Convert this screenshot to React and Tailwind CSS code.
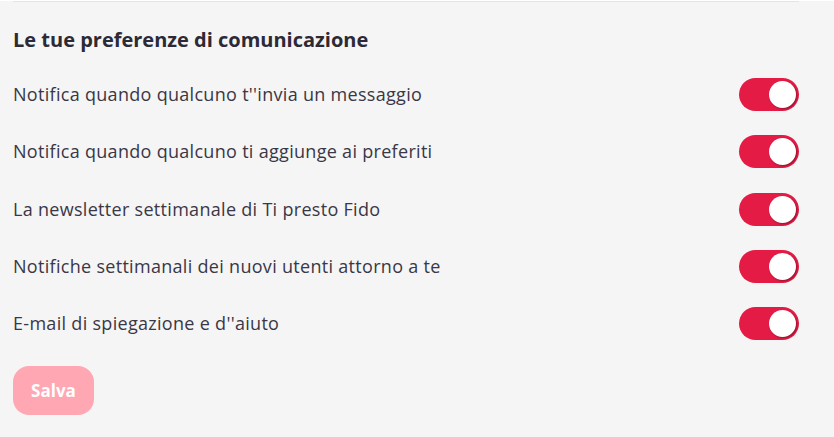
import { useState } from 'react';

const prefs = [
  "Notifica quando qualcuno t''invia un messaggio",
  'Notifica quando qualcuno ti aggiunge ai preferiti',
  'La newsletter settimanale di Ti presto Fido',
  'Notifiche settimanali dei nuovi utenti attorno a te',
  "E-mail di spiegazione e d''aiuto",
];

function Toggle({ on, onClick }) {
  return (
    <button
      onClick={onClick}
      className={`w-[60px] h-[33px] rounded-full p-[3px] flex items-center shrink-0 ${on ? 'bg-[#e31b45] justify-end' : 'bg-gray-300 justify-start'}`}
    >
      <span className="w-[27px] h-[27px] rounded-full bg-white shadow-[1px_1px_2px_rgba(0,0,0,0.35)]"></span>
    </button>
  );
}

export default function App() {
  const [values, setValues] = useState(prefs.map(() => true));

  return (
    <div className="min-h-screen bg-[#f5f5f5] font-['Open_Sans',sans-serif] text-[#3a3746]">
      <div className="w-[786px] ml-[13px] border-t border-[#e4e4e4] mt-px">
        <h2 className="text-[20px] font-bold pt-[24px] pb-[12px] leading-[28px] text-[#2c2a36]">Le tue preferenze di comunicazione</h2>

        <div className="flex flex-col">
          {prefs.map((label, i) => (
            <div key={label} className="flex items-center justify-between h-[57.25px]">
              <span className="text-[18px] tracking-[0.3px]">{label}</span>
              <Toggle
                on={values[i]}
                onClick={() => setValues(values.map((v, j) => (j === i ? !v : v)))}
              />
            </div>
          ))}
        </div>

        <button className="mt-[14px] w-[81px] h-[49px] rounded-[16px] bg-[#ffa8b3] text-white font-bold text-[17px]">
          Salva
        </button>
      </div>
    </div>
  );
}
